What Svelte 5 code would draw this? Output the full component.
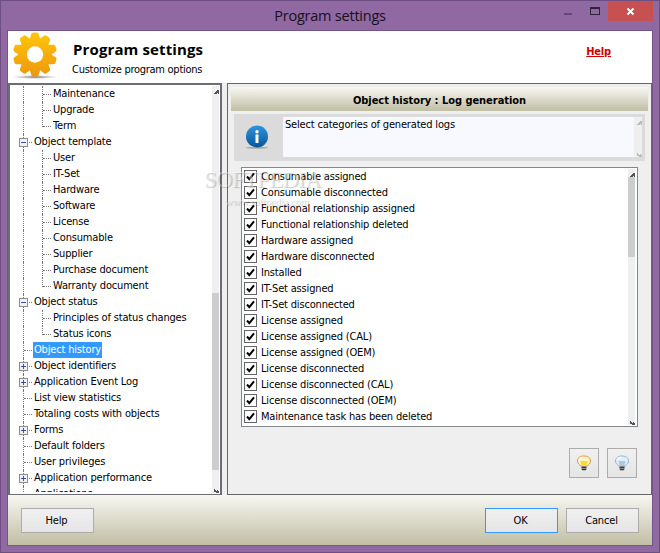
<script lang="ts">
	type Node = { label: string; level: number; box?: string; last?: boolean; selected?: boolean };

	const nodes: Node[] = [
		{ label: 'Maintenance', level: 1 },
		{ label: 'Upgrade', level: 1 },
		{ label: 'Term', level: 1, last: true },
		{ label: 'Object template', level: 0, box: 'minus' },
		{ label: 'User', level: 1 },
		{ label: 'IT-Set', level: 1 },
		{ label: 'Hardware', level: 1 },
		{ label: 'Software', level: 1 },
		{ label: 'License', level: 1 },
		{ label: 'Consumable', level: 1 },
		{ label: 'Supplier', level: 1 },
		{ label: 'Purchase document', level: 1 },
		{ label: 'Warranty document', level: 1, last: true },
		{ label: 'Object status', level: 0, box: 'minus' },
		{ label: 'Principles of status changes', level: 1 },
		{ label: 'Status icons', level: 1, last: true },
		{ label: 'Object history', level: 0, selected: true },
		{ label: 'Object identifiers', level: 0, box: 'plus' },
		{ label: 'Application Event Log', level: 0, box: 'plus' },
		{ label: 'List view statistics', level: 0 },
		{ label: 'Totaling costs with objects', level: 0 },
		{ label: 'Forms', level: 0, box: 'plus' },
		{ label: 'Default folders', level: 0 },
		{ label: 'User privileges', level: 0 },
		{ label: 'Application performance', level: 0, box: 'plus' },
		{ label: 'Applications', level: 0 }
	];

	let logs = $state(
		[
			'Consumable assigned',
			'Consumable disconnected',
			'Functional relationship assigned',
			'Functional relationship deleted',
			'Hardware assigned',
			'Hardware disconnected',
			'Installed',
			'IT-Set assigned',
			'IT-Set disconnected',
			'License assigned',
			'License assigned (CAL)',
			'License assigned (OEM)',
			'License disconnected',
			'License disconnected (CAL)',
			'License disconnected (OEM)',
			'Maintenance task has been deleted'
		].map((label) => ({ label, checked: true }))
	);

	function setAll(checked: boolean) {
		for (const log of logs) log.checked = checked;
	}

	const teeth = Array.from({ length: 10 }, (_, i) => i * 36);
</script>

{#snippet arrowUp()}
	<svg class="arrow" width="6" height="4" viewBox="0 0 6 4" shape-rendering="crispEdges">
		<path d="M0 4V3h1V2h1V1h1V0h2v4h-1V3H3v1z" fill="currentColor" />
	</svg>
{/snippet}

{#snippet arrowDown()}
	<svg class="arrow" width="6" height="4" viewBox="0 0 6 4" shape-rendering="crispEdges">
		<path d="M0 0h1v1h1v1h1V1h1v1h1v2H2V3H0z" fill="currentColor" />
	</svg>
{/snippet}

{#snippet bulb(kind: string)}
	<svg class="bulb {kind}" width="16" height="16" viewBox="0 0 16 16">
		<path
			class="glass"
			d="M1.500 6C1.500 3 4 1 8 1s6.500 2 6.500 5c0 2.500-1.800 3.800-3.500 5H5C3.300 9.800 1.500 8.500 1.500 6z"
		/>
		<path class="glow" d="M4.500 6h7l-1 5h-5z" />
		<path d="M5.500 11h5v3.500L9.500 15.500h-3l-1-1z" fill="#888" />
		<path d="M5.500 12.500h5M6 14.500h4" stroke="#333" stroke-width=".9" />
		<path d="M3 5C4 3 5 2.500 7 2.300" stroke="#fff" stroke-width="1.400" fill="none" />
	</svg>
{/snippet}

<div class="window">
	<div class="titlebar">
		<span class="title">Program settings</span>
		<svg class="controls" width="104" height="30" viewBox="0 0 104 30" shape-rendering="crispEdges">
			<path d="M9 12h8v2H9z" fill="#654774" />
			<path d="M35 6h10v8H35zM36 8v5h8V8z" fill="#2b2631" fill-rule="evenodd" />
			<path d="M53 0h45v20H53z" fill="#c75050" />
			<path
				d="M72.500 7.500l6 6M78.500 7.500l-6 6"
				stroke="#fff"
				stroke-width="1.800"
				shape-rendering="auto"
			/>
		</svg>
	</div>

	<div class="client">
		<header>
			<svg class="gear" width="46" height="48" viewBox="0 0 46 48">
				<defs>
					<linearGradient id="gold" gradientUnits="userSpaceOnUse" x1="0" y1="0" x2="0" y2="44">
						<stop offset="0" stop-color="#ffc60a" />
						<stop offset="1" stop-color="#ee980d" />
					</linearGradient>
					<radialGradient id="shade">
						<stop offset="0" stop-color="#777" />
						<stop offset="1" stop-color="#999" stop-opacity="0" />
					</radialGradient>
					<mask id="teeth">
						<circle cx="23" cy="22.500" r="16.500" fill="#fff" />
						{#each teeth as angle}
							<path
								d="M17.500 8l1.800-6q.4-1.500 2-1.500h3.400q1.600 0 2 1.500L28.500 8z"
								fill="#fff"
								transform="rotate({angle} 23 22.500)"
							/>
						{/each}
						<circle cx="23" cy="22.500" r="8.200" fill="#000" />
					</mask>
				</defs>
				<ellipse cx="23" cy="45" rx="23" ry="2" fill="url(#shade)" />
				<rect width="46" height="46" fill="url(#gold)" mask="url(#teeth)" />
			</svg>
			<div class="heading">
				<h1>Program settings</h1>
				<p>Customize program options</p>
			</div>
			<a class="help" href="#help">Help</a>
		</header>

		<main>
			<div class="tree">
				<ul>
					{#each nodes as node}
						<li class:child={node.level === 1} class:last={node.last}>
							<span class="trunk"></span>
							{#if node.level === 1}<span class="branch"></span>{/if}
							<span class="twig"></span>
							{#if node.box}
								<svg class="box" width="9" height="9" viewBox="0 0 9 9" shape-rendering="crispEdges">
									<path d="M0 0h9v9H0z" fill="#8c8c8c" />
									<path d="M1 1h7v7H1z" fill="#f2f2f2" />
									<path d="M2 4h5v1H2z" fill="#3953a4" />
									{#if node.box === 'plus'}<path d="M4 2h1v5H4z" fill="#3953a4" />{/if}
								</svg>
							{/if}
							<span class="label" class:selected={node.selected}>{node.label}</span>
						</li>
					{/each}
				</ul>
				<div class="scroll">
					{@render arrowUp()}
					<div class="thumb"></div>
					{@render arrowDown()}
				</div>
			</div>

			<section class="panel">
				<h2>Object history : Log generation</h2>
				<div class="info">
					<svg width="24" height="24" viewBox="0 0 24 24">
						<defs>
							<linearGradient id="blue" x1="0" y1="0" x2="0" y2="1">
								<stop offset="0" stop-color="#2d94df" />
								<stop offset="1" stop-color="#075698" />
							</linearGradient>
						</defs>
						<ellipse cx="12" cy="22.800" rx="11" ry="1" fill="#aaa" />
						<circle cx="12" cy="11.500" r="11" fill="url(#blue)" />
						<path d="M10.500 9.500h3v8.500h-3z" fill="#fff" />
						<circle cx="12" cy="6.700" r="1.700" fill="#fff" />
					</svg>
					<div class="memo">
						<p>Select categories of generated logs</p>
						<div class="memo-scroll">
							{@render arrowUp()}
							{@render arrowDown()}
						</div>
					</div>
				</div>
				<div class="list">
					<div class="checks">
						{#each logs as log}
							<label>
								<input type="checkbox" bind:checked={log.checked} />
								<svg width="13" height="13" viewBox="0 0 13 13">
									<rect x=".5" y=".5" width="12" height="12" fill="#fff" stroke="#666" />
									{#if log.checked}
										<path d="M3 6.500l2.300 2.700L10 3.300" stroke="#000" stroke-width="2" fill="none" />
									{/if}
								</svg>
								<span>{log.label}</span>
							</label>
						{/each}
					</div>
					<div class="scroll">
						{@render arrowUp()}
						<div class="thumb"></div>
						{@render arrowDown()}
					</div>
				</div>
				<div class="tools">
					<button aria-label="Select all" onclick={() => setAll(true)}>{@render bulb('on')}</button>
					<button aria-label="Clear all" onclick={() => setAll(false)}>{@render bulb('off')}</button>
				</div>
			</section>
		</main>

		<footer>
			<button>Help</button>
			<button class="primary">OK</button>
			<button>Cancel</button>
		</footer>
	</div>

	<div class="watermark">
		<div class="brand">SOFTPEDIA<sup>™</sup></div>
		<div class="site">www.softpedia.com</div>
	</div>
</div>

<style>
	:global(body) {
		overflow: hidden;
	}

	.window {
		position: relative;
		box-sizing: border-box;
		width: 660px;
		height: 553px;
		padding: 0 6px 6px;
		border: 1px solid #6d5081;
		background: #9068a2;
		color: #000;
		font: 11px/16px 'DejaVu Sans Condensed', 'DejaVu Sans', sans-serif;
		font-stretch: condensed;
		letter-spacing: -0.17px;
	}

	h1,
	h2,
	p,
	ul {
		margin: 0;
		padding: 0;
	}

	.titlebar {
		display: flex;
		height: 29px;
		margin-right: -6px;
	}

	.title {
		flex: 1;
		padding-left: 98px;
		font: 14.500px/29px 'Open Sans', sans-serif;
		letter-spacing: -0.22px;
		text-align: center;
		color: #171019;
	}

	.client {
		box-sizing: border-box;
		height: 516px;
		border: 1px solid #76538a;
		background: #efefef;
	}

	header {
		display: flex;
		height: 52px;
		background: #fff;
	}

	.gear {
		margin: 1px 0 0 4px;
	}

	.heading {
		flex: 1;
		padding: 8px 0 0 15px;
	}

	h1 {
		font: bold 15px/20px 'Open Sans', sans-serif;
		letter-spacing: 0.12px;
	}

	.heading p {
		margin-left: -1px;
		line-height: 21px;
		letter-spacing: -0.27px;
	}

	.help {
		margin: 13px 41px 0 0;
		font-weight: bold;
		color: #d00000;
	}

	main {
		display: flex;
		gap: 5px;
		height: 412px;
	}

	.tree {
		box-sizing: border-box;
		display: flex;
		width: 214px;
		padding: 1px 0 1px 0;
		border: 2px solid #6c6c74;
		border-bottom-width: 1px;
		background: #fff;
	}

	.tree ul {
		flex: 1;
		height: 406px;
		overflow: hidden;
		list-style: none;
	}

	li {
		position: relative;
		display: flex;
		align-items: center;
		height: 16px;
		padding-left: 23px;
		white-space: nowrap;
	}

	li.child {
		padding-left: 42px;
	}

	.trunk,
	.branch {
		position: absolute;
		top: 0;
		left: 13px;
		height: 16px;
		border-left: 1px dotted #777;
	}

	.branch {
		left: 32px;
	}

	.last .branch {
		height: 9px;
	}

	.twig {
		position: absolute;
		top: 8px;
		left: 14px;
		width: 8px;
		border-top: 1px dotted #777;
	}

	.child .twig {
		left: 33px;
	}

	.box {
		position: absolute;
		top: 4px;
		left: 9px;
	}

	.label {
		padding: 0 1px;
	}

	.selected {
		height: 14px;
		padding: 0;
		border: 1px dotted #d47a1a;
		line-height: 14px;
		background: #3399ff;
		color: #fff;
	}

	.scroll {
		display: flex;
		flex-direction: column;
		width: 7px;
		background: #efefef;
		color: #555;
	}

	.scroll .arrow:first-child {
		margin: 4px 0 0 2px;
	}

	.scroll .arrow:last-child {
		margin: auto 0 0 2px;
	}

	.tree .scroll {
		margin-right: 1px;
	}

	.thumb {
		background: #cdcdcd;
	}

	.tree .thumb {
		height: 177px;
		margin-top: 199px;
	}

	.panel {
		box-sizing: border-box;
		flex: 1;
		padding: 3px 3px 0;
		border: 1px solid #666;
	}

	h2 {
		height: 24px;
		background: linear-gradient(#f7f7f3, #c0bea3);
		font-size: 11px;
		line-height: 27px;
		text-align: center;
		letter-spacing: -0.04px;
	}

	.info {
		box-sizing: border-box;
		display: flex;
		align-items: center;
		height: 47px;
		margin: 3px 3px 6px;
		padding: 3px 3px 4px 11px;
		background: #dbdbdb;
	}

	.memo {
		display: flex;
		flex: 1;
		align-self: stretch;
		margin-left: 14px;
		background: #f8f9ff;
	}

	.memo p {
		flex: 1;
		padding-left: 2px;
	}

	.memo-scroll {
		display: flex;
		flex-direction: column;
		justify-content: space-between;
		box-sizing: border-box;
		width: 8px;
		padding-top: 4px;
		background: #efefef;
		color: #bbb;
	}

	.memo-scroll .arrow {
		margin-left: 3px;
	}

	.list {
		box-sizing: border-box;
		display: flex;
		width: 397px;
		height: 260px;
		margin-left: 10px;
		padding: 1px;
		border: 1px solid #828790;
		background: #fff;
	}

	.checks {
		flex: 1;
	}

	.checks label {
		display: flex;
		align-items: center;
		gap: 4px;
		height: 16px;
		padding-left: 1px;
	}

	.checks svg {
		margin-bottom: 1px;
	}

	input {
		position: absolute;
		opacity: 0;
		pointer-events: none;
	}

	.list .scroll {
		margin-right: 1px;
	}

	.list .thumb {
		height: 80px;
	}

	.tools {
		display: flex;
		justify-content: flex-end;
		gap: 8px;
		padding: 21px 11px 0 0;
	}

	button {
		box-sizing: border-box;
		width: 73px;
		height: 25px;
		padding: 0 2px 0 0;
		border: 1px solid #acacac;
		background: linear-gradient(#f0f0f0, #e5e5e5);
		color: #000;
		font: inherit;
		letter-spacing: inherit;
	}

	.tools button {
		display: flex;
		align-items: center;
		justify-content: center;
		width: 30px;
		height: 30px;
		padding: 0;
	}

	.bulb {
		margin-top: -1px;
	}

	.on .glass {
		fill: #fff3c4;
		stroke: #df9740;
	}

	.on .glow {
		fill: #ffd832;
	}

	.off .glass {
		fill: #e0eff7;
		stroke: #8fb8d0;
	}

	.off .glow {
		fill: #a9c9dc;
	}

	footer {
		display: flex;
		gap: 8px;
		height: 50px;
		box-sizing: border-box;
		padding: 13px;
		background: linear-gradient(#f7f7f3, #c0bea3);
	}

	footer button:first-child {
		margin-right: auto;
	}

	.primary {
		border-color: #3399ff;
	}

	.watermark {
		position: absolute;
		top: 166px;
		left: 203px;
		width: 130px;
		pointer-events: none;
		color: rgba(255, 255, 255, 0.45);
		font-family: 'Liberation Serif', serif;
		text-shadow: 1px 1px 1px rgba(0, 0, 0, 0.22);
	}

	.brand {
		font-size: 23px;
		line-height: 26px;
		letter-spacing: -0.8px;
		white-space: nowrap;
	}

	sup {
		font-size: 8px;
		line-height: 0;
		vertical-align: 9px;
	}

	.site {
		padding-left: 21px;
		font-size: 11px;
		line-height: 17px;
		letter-spacing: -0.25px;
	}
</style>
